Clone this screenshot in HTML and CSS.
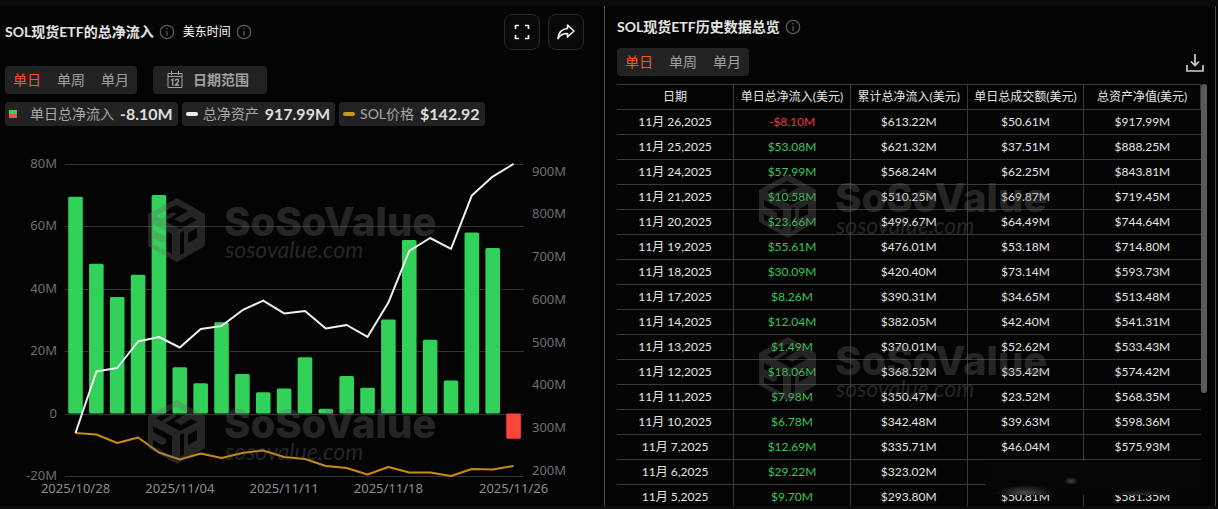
FILE: index.html
```
<!DOCTYPE html>
<html lang="zh-CN">

<head>
    <meta charset="UTF-8">
    <meta name="viewport" content="width=device-width, initial-scale=1.0">
    <title>SOL现货ETF</title>
    <link rel="stylesheet" href="styles.css">
</head>

<body>
    <div class="page">
        <section class="panel chart-panel">
            <div class="head">
                <h2>SOL现货ETF的总净流入</h2>
                <svg class="info" viewBox="0 0 16 16"><circle cx="8" cy="8" r="6.7" /><path d="M8 7v5M8 4v1.5" /></svg>
                <span class="zone">美东时间</span>
                <svg class="info" viewBox="0 0 16 16"><circle cx="8" cy="8" r="6.7" /><path d="M8 7v5M8 4v1.5" /></svg>
                <div class="tools">
                    <button type="button" aria-label="全屏">
                        <svg width="16" height="16" viewBox="0 0 16 16"><path d="M1.5 5V1.5H5M11 1.5h3.5V5M14.5 11v3.5H11M5 14.5H1.5V11" /></svg>
                    </button>
                    <button type="button" aria-label="分享">
                        <svg width="20" height="18" viewBox="0 0 20 18"><path d="M11.5 5.5V2L18 8L11.5 14V10.5C7 10.5 4 12 2 15.5C2.5 9.5 6 6 11.5 5.500Z" /></svg>
                    </button>
                </div>
            </div>

            <div class="controls">
                <div class="tabs">
                    <button type="button" class="now">单日</button>
                    <button type="button">单周</button>
                    <button type="button">单月</button>
                </div>
                <button type="button" class="range">
                    <svg width="16" height="18" viewBox="0 0 16 18">
                        <path d="M1 2.5h14v14H1zM1 5.5h14M4.5 0v4M11.5 0v4" />
                        <path stroke-width="1.4" d="M4.2 9.3L5.7 8.300V14.500M8.300 9.800q.2-1.500 1.700-1.500t1.500 1.500q0 1.200-3 4.200h3.500" />
                    </svg>
                    日期范围
                </button>
            </div>

            <ul class="legend">
                <li><i class="sq"></i>单日总净流入<b>-8.10M</b></li>
                <li><i class="dash"></i>总净资产<b>917.99M</b></li>
                <li><i class="dash gold"></i>SOL价格<b>$142.92</b></li>
            </ul>

            <svg id="chart" viewBox="0 126 604 380" role="img" aria-label="SOL现货ETF的总净流入"></svg>
        </section>

        <section class="panel table-panel">
            <div class="title">
                <h2>SOL现货ETF历史数据总览</h2>
                <svg class="info" viewBox="0 0 16 16"><circle cx="8" cy="8" r="6.7" /><path d="M8 7v5M8 4v1.5" /></svg>
            </div>
            <div class="bar">
                <div class="tabs">
                    <button type="button" class="now">单日</button>
                    <button type="button">单周</button>
                    <button type="button">单月</button>
                </div>
                <button type="button" class="download" aria-label="下载">
                    <svg width="18" height="18" viewBox="0 0 18 18"><path d="M9 0v11M5 7.5l4 4l4-4M1 11v6h16v-6" /></svg>
                </button>
            </div>

            <div class="scroll">
                <table>
                    <thead>
                        <tr><th>日期</th><th>单日总净流入(美元)</th><th>累计总净流入(美元)</th><th>单日总成交额(美元)</th><th>总资产净值(美元)</th></tr>
                    </thead>
                    <tbody>
                        <tr><td>11月 26,2025</td><td class="down">-$8.10M</td><td>$613.22M</td><td>$50.61M</td><td>$917.99M</td></tr>
                        <tr><td>11月 25,2025</td><td class="up">$53.08M</td><td>$621.32M</td><td>$37.51M</td><td>$888.25M</td></tr>
                        <tr><td>11月 24,2025</td><td class="up">$57.99M</td><td>$568.24M</td><td>$62.25M</td><td>$843.81M</td></tr>
                        <tr><td>11月 21,2025</td><td class="up">$10.58M</td><td>$510.25M</td><td>$69.87M</td><td>$719.45M</td></tr>
                        <tr><td>11月 20,2025</td><td class="up">$23.66M</td><td>$499.67M</td><td>$64.49M</td><td>$744.64M</td></tr>
                        <tr><td>11月 19,2025</td><td class="up">$55.61M</td><td>$476.01M</td><td>$53.18M</td><td>$714.80M</td></tr>
                        <tr><td>11月 18,2025</td><td class="up">$30.09M</td><td>$420.40M</td><td>$73.14M</td><td>$593.73M</td></tr>
                        <tr><td>11月 17,2025</td><td class="up">$8.26M</td><td>$390.31M</td><td>$34.65M</td><td>$513.48M</td></tr>
                        <tr><td>11月 14,2025</td><td class="up">$12.04M</td><td>$382.05M</td><td>$42.40M</td><td>$541.31M</td></tr>
                        <tr><td>11月 13,2025</td><td class="up">$1.49M</td><td>$370.01M</td><td>$52.62M</td><td>$533.43M</td></tr>
                        <tr><td>11月 12,2025</td><td class="up">$18.06M</td><td>$368.52M</td><td>$35.42M</td><td>$574.42M</td></tr>
                        <tr><td>11月 11,2025</td><td class="up">$7.98M</td><td>$350.47M</td><td>$23.52M</td><td>$568.35M</td></tr>
                        <tr><td>11月 10,2025</td><td class="up">$6.78M</td><td>$342.48M</td><td>$39.63M</td><td>$598.36M</td></tr>
                        <tr><td>11月 7,2025</td><td class="up">$12.69M</td><td>$335.71M</td><td>$46.04M</td><td>$575.93M</td></tr>
                        <tr><td>11月 6,2025</td><td class="up">$29.22M</td><td>$323.02M</td><td></td><td></td></tr>
                        <tr><td>11月 5,2025</td><td class="up">$9.70M</td><td>$293.80M</td><td>$50.81M</td><td>$581.35M</td></tr>
                    </tbody>
                </table>
                <span class="thumb"></span>
                <div class="cover first"></div>
                <div class="cover second"></div>
                <span class="smudge"></span>
            </div>
        </section>
    </div>

    <script src="chart.js"></script>
</body>

</html>
```

FILE: styles.css
```
body,
h2,
ul,
li {
    margin: 0;
    padding: 0;
}

ul {
    list-style-type: none;
}

body {
    background: #0c0c0c;
    color: #e4e4e4;
    font: 14px/20px Lato, "Noto Sans CJK SC", sans-serif;
}

button {
    margin: 0;
    padding: 0;
    border: 0;
    background: none;
    color: #a0a0a0;
    font: inherit;
    cursor: pointer;
}

button path {
    fill: none;
    stroke: currentColor;
}

h2 {
    font-size: 14px;
    line-height: 20px;
    font-weight: 700;
    white-space: nowrap;
}

.page {
    display: grid;
    grid-template-columns: minmax(0, 605fr) minmax(0, 613fr);
    padding-top: 6px;
    background: linear-gradient(#0a0a0a 6px, #040404 6px);
}

.panel {
    box-sizing: border-box;
    border-right: 1px solid #484848;
}

.info {
    width: 16px;
    height: 16px;
    fill: none;
    stroke: #5c5c5c;
    stroke-width: 1.2;
    flex: none;
}

/* 左侧图表 */
.head {
    display: flex;
    align-items: center;
    gap: 5px;
    padding: 8px 20px 0 5px;
}

.zone {
    margin-left: 3px;
    color: #fff;
    font-size: 12px;
}

.tools {
    display: flex;
    gap: 8px;
    margin-left: auto;
}

.tools button {
    display: flex;
    align-items: center;
    justify-content: center;
    box-sizing: border-box;
    width: 36px;
    height: 36px;
    border: 1px solid #2a2a2a;
    border-radius: 8px;
    background: #090909;
    color: #f4f4f4;
}

.tools path {
    stroke-width: 1.7;
    stroke-linejoin: round;
}

.controls {
    display: flex;
    gap: 16px;
    padding: 16px 5px 0;
}

.tabs {
    display: flex;
    border-radius: 4px;
    background: #222;
}

.tabs button {
    height: 28px;
    padding: 0 8px;
}

.tabs .now {
    color: #ff4f2e;
}

.range {
    display: flex;
    align-items: center;
    gap: 10px;
    height: 28px;
    padding: 0 18px 0 14px;
    border-radius: 4px;
    background: #222;
    font-weight: 700;
}

.legend {
    display: flex;
    gap: 4px;
    padding: 8px 5px 0;
}

.legend li {
    display: flex;
    align-items: center;
    gap: 5px;
    height: 24px;
    padding: 0 5px 0 4px;
    border-radius: 4px;
    background: #222;
    color: #a8a8a8;
    white-space: nowrap;
}

.legend b {
    margin-left: 1px;
    color: #dedede;
    font-size: 16px;
}

.sq {
    width: 8px;
    height: 8px;
    margin-right: 8px;
    background: linear-gradient(#32d15a 50%, #f0504a 50%);
}

.dash {
    width: 12px;
    height: 4px;
    border-radius: 2px;
    background: #ededed;
}

.gold {
    background: #c9981a;
}

#chart {
    display: block;
    width: 100%;
}

#chart text {
    font: 13px "Noto Sans", sans-serif;
    fill: #6e6e76;
}

#chart .date {
    fill: #8c8c8c;
    text-anchor: middle;
}

#chart .left {
    text-anchor: end;
}

.grid {
    stroke: #333;
}

.in {
    fill: #32d15a;
}

.out {
    fill: #ff453a;
}

.assets,
.price {
    fill: none;
    stroke: #f0f0f0;
    stroke-width: 2;
    stroke-linejoin: round;
}

.price {
    stroke: #c98a16;
}

/* 水印 */
.mark {
    fill: #6a6a6a;
    opacity: 0.32;
}

.mark .mark-name,
#chart .mark-name {
    font: 800 40px Inter, sans-serif;
    fill: #6a6a6a;
}

.mark .mark-site,
#chart .mark-site {
    font: italic 23px Lato, sans-serif;
    fill: #6a6a6a;
}

/* 右侧表格 */
.table-panel {
    margin-right: 2px;
    padding: 11px 8px 0 12px;
}

.title {
    display: flex;
    align-items: center;
    gap: 5px;
}

.bar {
    display: flex;
    justify-content: space-between;
    padding: 11px 3px 8px 0;
}

.download {
    display: flex;
    align-items: flex-end;
    padding-bottom: 4px;
    color: #ccc;
}

.download path {
    stroke-width: 1.7;
}

.scroll {
    position: relative;
    max-height: 422px;
    padding-right: 6px;
    overflow: hidden;
}

table {
    width: 100%;
    table-layout: fixed;
    border-collapse: collapse;
    font-size: 12px;
    line-height: 24px;
    text-align: center;
}

th,
td {
    height: 24px;
    padding: 0;
    border: 1px solid #383838;
    border-bottom: 0;
    font-weight: 400;
    white-space: nowrap;
}

th:first-child,
td:first-child {
    border-left: 0;
}

td:last-child {
    border-right: 0;
}

.up {
    color: #35c759;
}

.down {
    color: #f5333f;
}

.thumb {
    position: absolute;
    top: 0;
    right: 0;
    width: 6px;
    height: 309px;
    border-radius: 3px;
    background: #5a5a5a;
}

.cover {
    position: absolute;
    left: 24%;
    pointer-events: none;
}

.first {
    top: 90px;
}

.second {
    top: 253px;
}

/* 遮住最后两行的右侧 */
.smudge {
    position: absolute;
    right: 0;
    bottom: 11px;
    width: 222px;
    height: 34px;
    background:
        radial-gradient(ellipse 28px 8px at 40px 32px, #4a4a4a, transparent),
        radial-gradient(ellipse 7px 4px at 86px 20px, #444, transparent),
        radial-gradient(ellipse 30px 5px at 156px 34px, #333, transparent),
        #060606;
}
```

FILE: chart.js
```
var inflow = [69.5, 48, 37.3, 44.5, 70, 14.8, 9.7, 29.22, 12.69, 6.78, 7.98, 18.06, 1.49, 12.04, 8.26, 30.09, 55.61, 23.66, 10.58, 57.99, 53.08, -8.1];
var assets = [288.8, 432.6, 440.8, 502.7, 513.3, 488.7, 532, 539, 575.93, 598.36, 568.35, 574.42, 533.43, 541.31, 513.48, 593.73, 714.8, 744.64, 719.45, 843.81, 888.25, 917.99];
var price = [195, 192.6, 179.2, 187.9, 164.2, 153.2, 162.6, 155.5, 163.4, 167.4, 157.1, 154, 142.9, 139.8, 129.5, 141.3, 132.7, 132.7, 127.1, 138.2, 137.4, 142.92];
var dates = { 0: "2025/10/28", 5: "2025/11/04", 10: "2025/11/11", 15: "2025/11/18", 21: "2025/11/26" };

function x(i) {
    return 75.5 + i * 20.86;
}
//左轴:净流入
function flowY(v) {
    return 413.5 - v * 3.12;
}
//右轴:净资产
function assetY(v) {
    return 171.6 + (900 - v) * 0.4277;
}
//价格没有坐标轴
function priceY(v) {
    return 466 + (142.92 - v) * 0.634;
}

function line(data, y, name) {
    var points = data.map(function (v, i) {
        return x(i).toFixed(1) + "," + y(v).toFixed(1);
    });
    return '<polyline class="' + name + '" points="' + points.join(" ") + '"/>';
}

//水印:立方体和网址
function mark(left, y) {
    return '<svg class="mark" x="' + left + '" y="' + y + '" width="300" height="68" viewBox="0 0 300 68">' +
        '<path fill-rule="evenodd" d="M29 0L57 16V48L29 64L0 48V16Z' +
        'M8 18L28 7L40 13L26 21L33 25L43 19L49 22L32 31L17 23L29 16L25 14L13 21Z' +
        'M5 26L24 36V56L5 46V40L14 45L18 43V39L5 32Z' +
        'M32 35L36 33V55L32 57Z M40 35L49 30V40L40 45Z"/>' +
        '<text class="mark-name" x="76" y="38">SoSoValue</text>' +
        '<text class="mark-site" x="77" y="60">sosovalue.com</text></svg>';
}

var html = "";
for (var v = 80; v >= -20; v -= 20) {
    var gy = Math.round(flowY(v)) + 0.5;
    html += '<path class="grid" d="M65 ' + gy + 'H524"/>';
    html += '<text class="left" x="57" y="' + (gy + 3) + '">' + (v ? v + "M" : 0) + '</text>';
}
for (var a = 900; a >= 200; a -= 100) {
    html += '<text x="532" y="' + Math.round(assetY(a) + 4) + '">' + a + 'M</text>';
}
for (var i = 0; i < inflow.length; i++) {
    var barY = flowY(Math.max(inflow[i], 0));
    var barH = Math.abs(inflow[i]) * 3.12;
    html += '<rect class="' + (inflow[i] < 0 ? "out" : "in") + '" x="' + (x(i) - 7.3) + '" y="' + barY + '" width="14.6" height="' + barH + '" rx="1.5"/>';
}
for (var d in dates) {
    html += '<text class="date" x="' + x(d) + '" y="493">' + dates[d] + '</text>';
}
html += line(price, priceY, "price") + line(assets, assetY, "assets");
html += mark(148, 198) + mark(148, 400);
document.getElementById("chart").innerHTML = html;

var covers = document.getElementsByClassName("cover");
for (var n = 0; n < covers.length; n++) {
    covers[n].innerHTML = mark(0, 0);
}
```
